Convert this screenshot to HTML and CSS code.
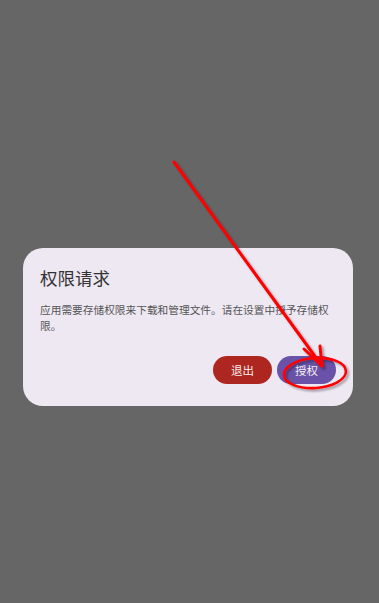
FILE: index.html
```html
<!DOCTYPE html>
<html>
<head>
  <meta name="viewport" content="width=device-width, initial-scale=1.0">
  <title>权限请求</title>
  <link rel="stylesheet" href="styles.css">
</head>
<body>

  <!-- Permission dialog -->
  <div class="dialog">
    <h1 class="dialog-title">权限请求</h1>
    <p class="dialog-text">应用需要存储权限来下载和管理文件。请在设置中授予存储权限。</p>
    <div class="dialog-actions">
      <button class="btn btn-exit">退出</button>
      <button class="btn btn-grant">授权</button>
    </div>
  </div>

  <!-- Annotation drawn over the screenshot -->
  <svg class="markup" width="379" height="603" viewBox="0 0 379 603">
    <defs>
      <filter id="shadow" x="-10%" y="-10%" width="130%" height="130%">
        <feDropShadow dx="2" dy="2" stdDeviation="1.2" flood-color="#000" flood-opacity="0.35"/>
      </filter>
    </defs>
    <g filter="url(#shadow)" stroke="#f00" fill="none" stroke-linecap="round" stroke-linejoin="round">
      <line x1="174" y1="162" x2="322" y2="366" stroke-width="3"/>
      <polyline points="304,349 322,366 320,346" stroke-width="3"/>
      <ellipse cx="315" cy="373" rx="31" ry="15" transform="rotate(-4 315 373)" stroke-width="2.6"/>
    </g>
  </svg>

</body>
</html>
```

FILE: styles.css
```css
* {
  box-sizing: border-box;
  margin: 0;
  padding: 0;
}

body {
  font-family: Roboto, "Noto Sans CJK SC", sans-serif;
  width: 379px;
  height: 603px;
  overflow: hidden;
  background-color: #666666;
  position: relative;
}

.dialog {
  width: 330px;
  margin: 248px 0 0 23px;
  padding: 19px 17px 22px 17px;
  background: #eee8f3;
  border-radius: 20px;
}

.dialog-title {
  font-size: 17.5px;
  font-weight: 400;
  line-height: 24px;
  color: #333;
  margin-bottom: 12px;
}

.dialog-text {
  font-size: 10.7px;
  line-height: 16px;
  color: #555;
  padding-right: 4px;
}

.dialog-actions {
  display: flex;
  justify-content: flex-end;
  gap: 5px;
  margin-top: 21px;
}

.btn {
  width: 59px;
  height: 28px;
  border: none;
  border-radius: 14px;
  font-family: Roboto, "Noto Sans CJK SC", sans-serif;
  font-size: 11.5px;
  color: #f4eeee;
}

.btn-exit {
  background: #ae2620;
}

.btn-grant {
  background: #6a52a8;
}

.markup {
  position: absolute;
  top: 0;
  left: 0;
  pointer-events: none;
}
```
